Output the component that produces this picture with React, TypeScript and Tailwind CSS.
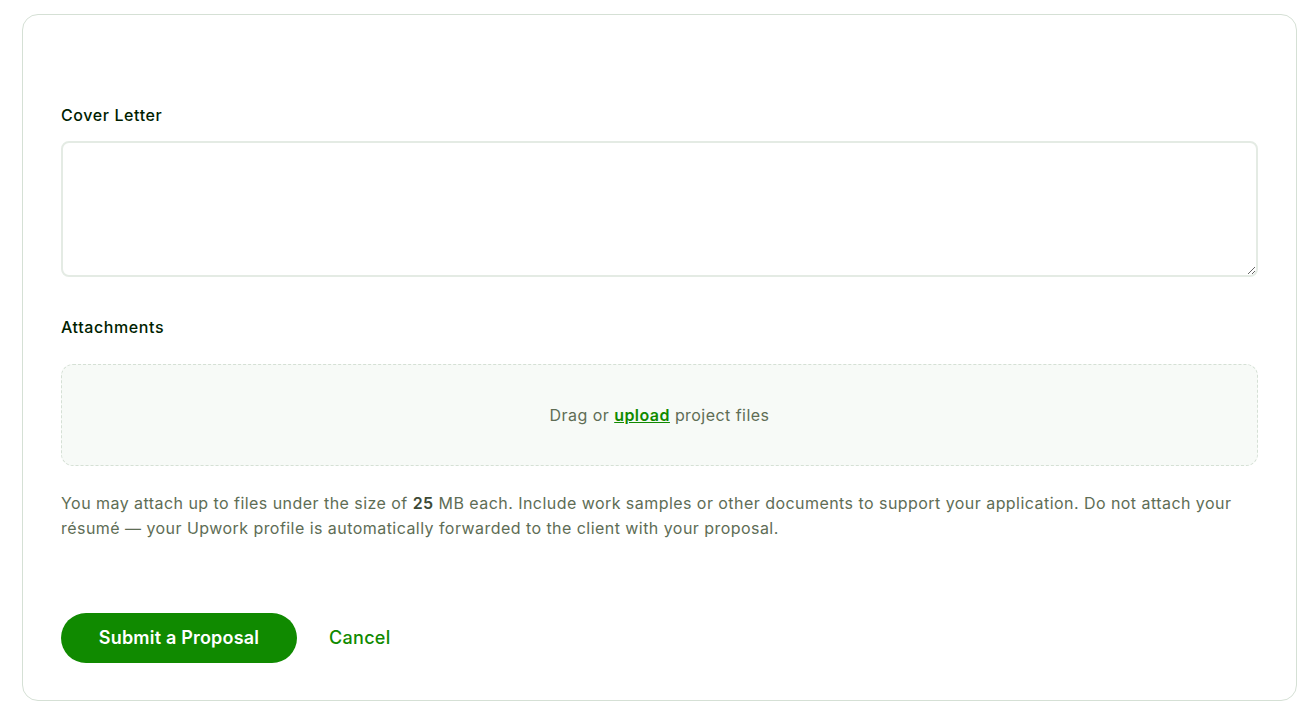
import React from 'react';

export default function App() {
  return (
    <div className="min-h-screen bg-white pt-[14px] pl-[22px] pr-[13px] font-['Inter',sans-serif] text-[#001e00]">
      <div className="h-[687px] rounded-2xl border border-[#d5e0d5] px-[38px] pt-[88px]">
        <label className="block text-base font-medium leading-6 tracking-[0.6px]">Cover Letter</label>
        <textarea className="mt-[14px] block h-[136px] w-full resize-y rounded-lg border-2 border-[#e4ebe4] outline-none" />

        <label className="mt-[38px] block text-base font-medium leading-6 tracking-[0.6px]">Attachments</label>
        <div className="mt-[25px] flex h-[102px] items-center justify-center rounded-xl border border-dashed border-[#d5e0d5] bg-[#f7faf7] text-base tracking-[0.45px] text-[#5e6d55]">
          <span>
            Drag or{' '}
            <a href="#" className="font-semibold text-[#108a00] underline">
              upload
            </a>{' '}
            project files
          </span>
        </div>

        <p className="mt-[25px] text-base leading-[25px] tracking-[0.45px] text-[#5e6d55]">
          You may attach up to files under the size of <strong className="font-semibold text-[#3d4a36]">25</strong> MB each. Include work samples or other
          documents to support your application. Do not attach your résumé — your Upwork profile is automatically forwarded to the client with
          your proposal.
        </p>

        <div className="mt-[72px] flex items-center gap-8">
          <button className="h-[50px] w-[236px] rounded-full bg-[#108a00] text-lg font-semibold tracking-[0.2px] text-white">Submit a Proposal</button>
          <button className="text-lg font-medium tracking-[0.3px] text-[#108a00]">Cancel</button>
        </div>
      </div>
    </div>
  );
}
